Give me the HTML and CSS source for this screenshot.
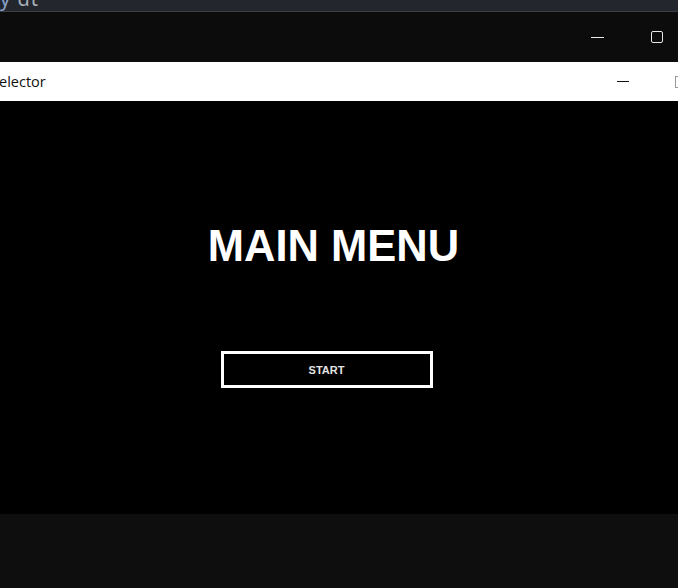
FILE: index.html
```html
<!DOCTYPE html>
<html>
<head>
<meta charset="utf-8">
<link rel="stylesheet" href="styles.css">
</head>
<body>
<div class="editor-strip"><span class="tab-text"><span class="blue">y</span> dt</span></div>
<div class="host-bar">
  <span class="host-min"></span>
  <span class="host-max"></span>
</div>
<div class="app-bar">
  <span class="app-title">elector</span>
  <span class="app-min"></span>
  <span class="app-max"></span>
</div>
<main class="canvas">
  <h1 class="menu-title">MAIN MENU</h1>
  <button class="start-btn">START</button>
</main>
<div class="footer"></div>
</body>
</html>
```
FILE: styles.css
```css
html, body {
  margin: 0;
  padding: 0;
  width: 678px;
  height: 588px;
  overflow: hidden;
  background: #0e0e0e;
}
body {
  display: flex;
  flex-direction: column;
  font-family: "Liberation Sans", Arial, sans-serif;
}
.editor-strip {
  height: 11px;
  background: #23262d;
  border-bottom: 1px solid #3b3e45;
  overflow: hidden;
  position: relative;
}
.tab-text {
  position: absolute;
  left: 0;
  top: -11px;
  font-family: "Noto Sans", sans-serif;
  font-size: 20px;
  line-height: 20px;
  color: #a9b0bb;
  letter-spacing: 1px;
}
.tab-text .blue { color: #8aa2c8; }
.host-bar {
  height: 50px;
  background: #0c0c0c;
  display: flex;
  align-items: center;
  justify-content: flex-end;
}
.host-min {
  width: 13px;
  height: 1px;
  background: #e8e8e8;
  margin-right: 47px;
}
.host-max {
  width: 10px;
  height: 10px;
  border: 1.3px solid #e8e8e8;
  border-radius: 2px;
  margin-right: 15px;
}
.app-bar {
  height: 39px;
  background: #ffffff;
  display: flex;
  align-items: center;
  position: relative;
}
.app-title {
  font-family: "Open Sans", "Noto Sans", sans-serif;
  font-size: 14.5px;
  color: #111;
  margin-left: -1px;
  flex: 1;
}
.app-min {
  width: 12px;
  height: 1px;
  background: #111;
  margin-right: 46px;
}
.app-max {
  width: 10px;
  height: 10px;
  border: 1px solid #999;
  margin-right: -9px;
}
.canvas {
  height: 413px;
  background: #000;
  display: flex;
  flex-direction: column;
  align-items: center;
}
.menu-title {
  margin: 123px 0 0 -11px;
  font-family: "Liberation Sans", Arial, sans-serif;
  font-weight: bold;
  font-size: 43.5px;
  line-height: 44px;
  color: #fff;
}
.start-btn {
  margin: 83px 0 0 -25px;
  width: 212px;
  height: 37px;
  background: #000;
  border: 3px solid #fff;
  color: #e4e4e4;
  font-family: "Liberation Sans", Arial, sans-serif;
  font-weight: bold;
  font-size: 11px;
  padding: 0;
}
.footer {
  flex: 1;
  background: #0e0e0e;
}
```
